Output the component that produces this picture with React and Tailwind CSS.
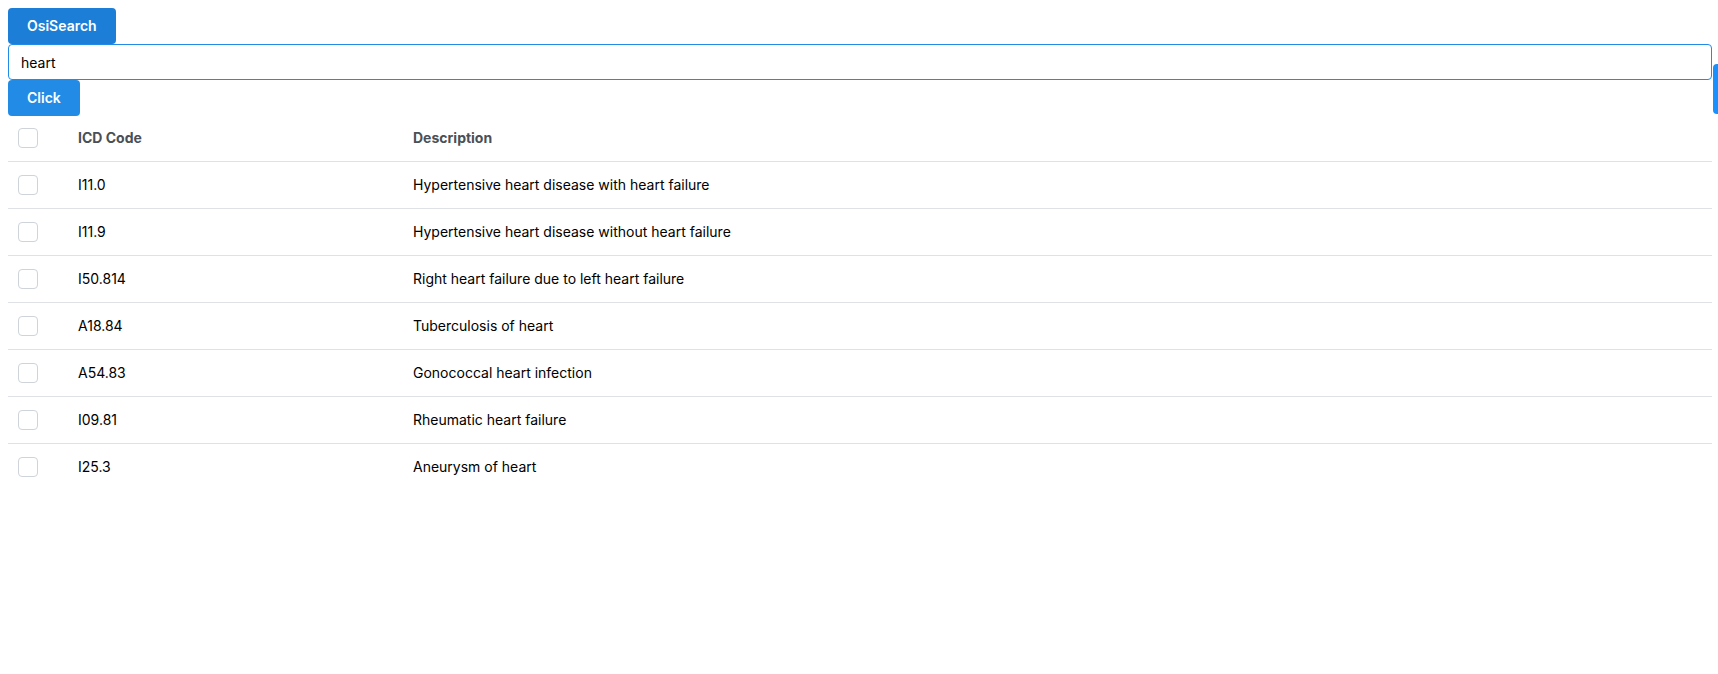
import { useState } from "react";

const ROWS = [
  { code: "I11.0", description: "Hypertensive heart disease with heart failure" },
  { code: "I11.9", description: "Hypertensive heart disease without heart failure" },
  { code: "I50.814", description: "Right heart failure due to left heart failure" },
  { code: "A18.84", description: "Tuberculosis of heart" },
  { code: "A54.83", description: "Gonococcal heart infection" },
  { code: "I09.81", description: "Rheumatic heart failure" },
  { code: "I25.3", description: "Aneurysm of heart" },
];

function Button({ className, children }) {
  return (
    <button
      type="button"
      className={`flex h-9 items-center rounded px-[19px] text-sm font-semibold text-white ${className}`}
    >
      {children}
    </button>
  );
}

function Checkbox({ label, checked, onChange }) {
  return (
    <input
      type="checkbox"
      aria-label={label}
      checked={checked}
      onChange={onChange}
      className="block size-5 appearance-none rounded border border-[#ced4da] bg-white checked:border-[#228be6] checked:bg-[#228be6]"
    />
  );
}

export default function App() {
  const [query, setQuery] = useState("heart");
  const [selected, setSelected] = useState([]);
  const allSelected = selected.length === ROWS.length;

  const toggle = (code) =>
    setSelected((codes) =>
      codes.includes(code) ? codes.filter((c) => c !== code) : [...codes, code]
    );

  return (
    <main className="flex flex-col items-start bg-white py-2 pr-1.5 pl-2 font-['Inter',sans-serif] text-sm text-black">
      <Button className="bg-[#1c7ed6]">OsiSearch</Button>
      <input
        type="text"
        aria-label="Search ICD codes"
        value={query}
        onChange={(e) => setQuery(e.target.value)}
        className="h-9 w-full rounded border border-[#228be6] bg-white px-3 outline-none"
      />
      <Button className="bg-[#228be6]">Click</Button>

      <table className="w-full table-fixed border-collapse text-left">
        <colgroup>
          <col className="w-[60px]" />
          <col className="w-[335px]" />
          <col />
        </colgroup>
        <thead>
          <tr className="h-[45px] border-b border-[#dee2e6] text-[#495057]">
            <th scope="col" className="px-2.5">
              <Checkbox
                label="Select all codes"
                checked={allSelected}
                onChange={() => setSelected(allSelected ? [] : ROWS.map((r) => r.code))}
              />
            </th>
            <th scope="col" className="px-2.5 font-bold">ICD Code</th>
            <th scope="col" className="px-2.5 font-bold">Description</th>
          </tr>
        </thead>
        <tbody>
          {ROWS.map(({ code, description }) => (
            <tr key={code} className="h-[47px] border-b border-[#dee2e6] last:border-b-0">
              <td className="px-2.5">
                <Checkbox
                  label={`Select ${code}`}
                  checked={selected.includes(code)}
                  onChange={() => toggle(code)}
                />
              </td>
              <td className="px-2.5">{code}</td>
              <td className="px-2.5">{description}</td>
            </tr>
          ))}
        </tbody>
      </table>

      <button
        type="button"
        aria-label="Open side panel"
        className="fixed top-16 right-0 h-[50px] w-[5px] rounded-l bg-[#1890ff]"
      />
    </main>
  );
}
